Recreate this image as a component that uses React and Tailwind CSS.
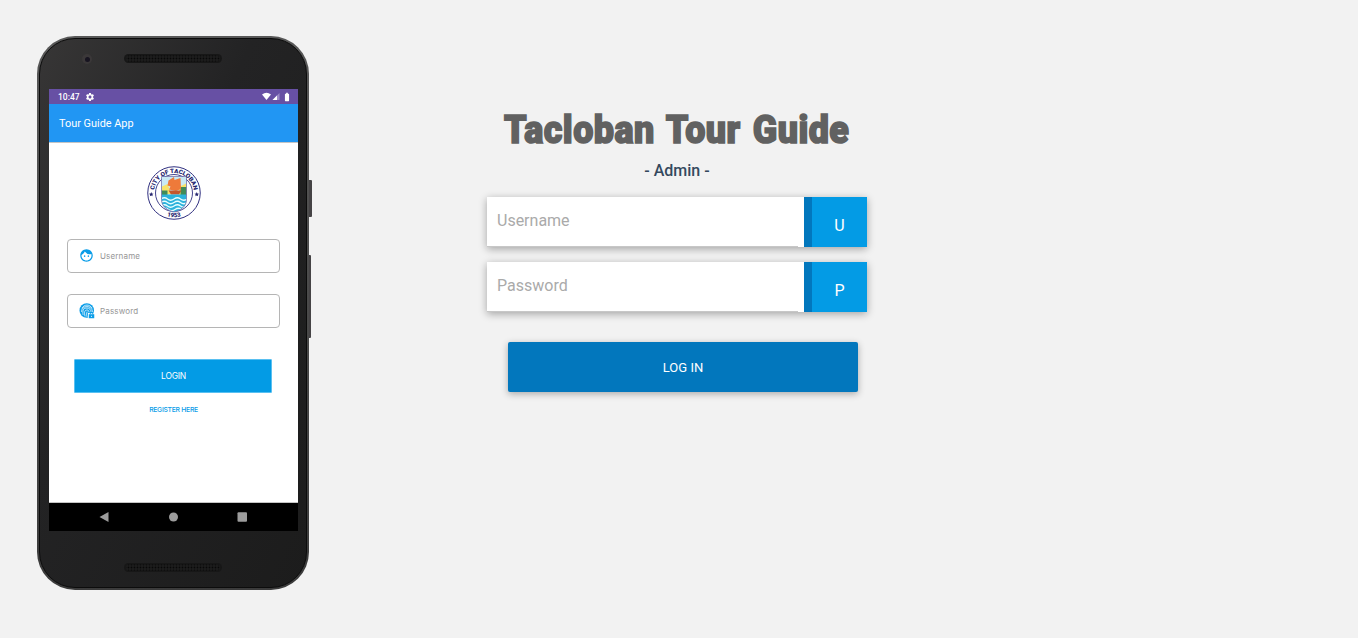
import React from "react";
import { MdFace, MdSettings, MdBatteryFull } from "react-icons/md";

function Grille() {
  return (
    <svg className="block" width="98" height="9" viewBox="0 0 98 9">
      <defs>
        <pattern id="mesh" width="3" height="3" patternUnits="userSpaceOnUse">
          <rect width="3" height="3" fill="#1d1d1d" />
          <circle cx="1.5" cy="1.5" r="0.9" fill="#080808" />
        </pattern>
      </defs>
      <rect width="98" height="9" rx="4.5" fill="#171717" />
      <rect x="2" y="1.5" width="94" height="6" rx="3" fill="url(#mesh)" />
    </svg>
  );
}

function CitySeal() {
  return (
    <svg className="block" width="54" height="54" viewBox="0 0 108 108">
      <defs>
        <path id="topArc" d="M14 54a40 40 0 0 1 80 0" />
        <path id="bottomArc" d="M5.500 54a48.500 48.500 0 0 0 97 0" />
        <clipPath id="shield">
          <path d="M29 21h50v46c0 14-12 22-25 25C41 89 29 81 29 67z" />
        </clipPath>
      </defs>
      <circle cx="54" cy="54" r="52.500" fill="#fff" stroke="#303080" strokeWidth="2" />
      <circle cx="54" cy="54" r="37" fill="#fff" stroke="#303080" strokeWidth="1.800" />
      <g clipPath="url(#shield)">
        <path fill="#c9e9f4" d="M28 20h54v74H28z" />
        <path fill="#f7e36a" d="M28 42l13-6 8 20H28zM64 42l18-9v25H64z" />
        <path fill="#418b58" d="M28 49h13v9H28zM67 42h13v17H67z" />
        <path fill="#ee7a3a" d="M43 29l11-7 1 6 12-4 1 22-10 4-14-3 3-6-6-2z" />
        <path fill="#c4562c" d="M43 49h26l-5 8H48z" />
        <path fill="#2cb2dc" d="M28 57h54v38H28z" />
        <path
          fill="none"
          stroke="#e8ffff"
          strokeWidth="2.500"
          d="M28 66q7-5 13 0t13 0 13 0 14 0M28 73q7-5 13 0t13 0 13 0 14 0M28 80q7-5 13 0t13 0 13 0 14 0M30 87q7-5 13 0t13 0 13 0"
        />
      </g>
      <path
        fill="none"
        stroke="#6a6aa8"
        strokeWidth="1.500"
        d="M29 21h50v46c0 14-12 22-25 25C41 89 29 81 29 67z"
      />
      <g fill="#24246e" fontFamily="Roboto, sans-serif" fontWeight="900" fontSize="12">
        <text>
          <textPath href="#topArc" startOffset="6" textLength="114" lengthAdjust="spacingAndGlyphs">
            CITY OF TACLOBAN
          </textPath>
        </text>
        <text fontSize="12" textAnchor="middle">
          <textPath href="#bottomArc" startOffset="50%">
            1953
          </textPath>
        </text>
      </g>
      <path
        fill="#24246e"
        d="M8.500 52l1.300 3 3.200.3-2.400 2.200.7 3.200-2.800-1.700-2.800 1.700.7-3.200L4 55.300l3.200-.3zM99.500 52l1.300 3 3.200.3-2.400 2.200.7 3.200-2.800-1.700-2.800 1.700.7-3.200-2.400-2.200 3.200-.3z"
      />
    </svg>
  );
}

function FingerprintLock() {
  return (
    <svg className="block" width="16" height="16" viewBox="0 0 32 32">
      <circle cx="15.500" cy="15" r="14.500" fill="#0a9de8" />
      <g fill="none" stroke="#fff" strokeWidth="1.500" strokeLinecap="round">
        <path d="M6 10c5-8 15-8 20 0" />
        <path d="M5 17c0-13 21-14 22 0" />
        <path d="M8 23c-1-8 0-13 8-13 5 0 8 4 8 7" />
        <path d="M12 26c-2-7-1-12 4-12 3 0 4 2 4 4" />
        <path d="M16 27c-1-4-1-6 0-9" />
      </g>
      <path fill="#fff" d="M18 20h14v12H18z" />
      <path fill="#0a9de8" d="M19.500 22.500h11v8h-11z" />
      <path fill="none" stroke="#0a9de8" strokeWidth="1.800" d="M22 23v-2q3-3 6 0v2" />
      <circle cx="25" cy="26.500" r="1.200" fill="#fff" />
    </svg>
  );
}

function PhoneField({ icon, label }) {
  return (
    <div className="flex h-[34px] items-center rounded-[4px] border border-[#b5b5b5] pb-[1px] pl-[11px]">
      <span className="flex w-4 justify-start">{icon}</span>
      <span className="ml-[5px] font-['Inter'] text-[8px] leading-[12px] tracking-[0.02em] text-[#969696]">{label}</span>
    </div>
  );
}

function Phone() {
  return (
    <div className="relative h-[554px] w-[272px]">
      <div className="absolute top-[144px] -right-[3px] h-[37px] w-[4px] rounded-r-[1px] bg-[#454345]" />
      <div className="absolute top-[219px] -right-[2px] h-[83px] w-[4px] rounded-r-[1px] bg-[#454345]" />
      <div className="relative h-full rounded-[38px] bg-linear-to-b from-[#585858] to-[#3b3b3b] p-[2px]">
        <div className="flex h-full flex-col rounded-[36px] border border-[#0c0c0c] bg-linear-to-br from-[#373636] via-[#232324] via-40% to-[#1c1c1c] pr-[8px] pl-[9px]">
          <div className="relative flex h-[50px] justify-center pt-[15px] pr-[2px]">
            <div className="absolute top-[15px] left-[33px] flex size-[10px] items-center justify-center rounded-full bg-[#3b3839]">
              <div className="size-[5px] rounded-full bg-[#171420]" />
            </div>
            <Grille />
          </div>
          <div className="flex h-[442px] w-[249px] flex-col bg-white font-['Roboto']">
            <div className="flex h-[15px] items-center bg-[#6750a4] pl-[9px] text-white">
              <span className="w-[21px] pt-[1px] text-[8.500px] leading-[14px] font-medium whitespace-nowrap">10:47</span>
              <MdSettings className="ml-[6px]" size={10} />
              <svg className="ml-auto" width="20" height="9" viewBox="0 0 20 9">
                <path fill="#fff" d="M0 2.500Q4.500-1 9 2.500L4.500 8z" />
                <path fill="#9d8bc7" d="M17.500 1v7h-7z" />
                <path fill="#fff" d="M15 3.500V8h-4.500z" />
              </svg>
              <MdBatteryFull className="mr-[6px]" size={10} />
            </div>
            <div className="flex h-[38px] items-center bg-[#2196f3] pt-[2px] pl-[10px] text-[10.900px] text-white">
              Tour Guide App
            </div>
            <div className="flex h-[361px] flex-col border-y border-[#c4c4c4] px-[18px] pt-[23px]">
              <div className="flex justify-center">
                <CitySeal />
              </div>
              <div className="mt-[19px] flex flex-col gap-[21px]">
                <PhoneField icon={<MdFace size={15} className="text-[#0a9de8]" />} label="Username" />
                <PhoneField icon={<FingerprintLock />} label="Password" />
              </div>
              <div className="mr-[8px] ml-[7px] mt-[31px] flex h-[34px] items-center justify-center rounded-[1px] border border-[#59c0f1] bg-[#039be5] pl-[1px] font-['Inter'] text-[8.500px] tracking-[-0.03em] text-white">
                LOGIN
              </div>
              <div className="mt-[12px] text-center font-['Inter'] text-[6.800px] leading-[10px] font-medium tracking-[-0.04em] text-[#0a9de8]">
                REGISTER HERE
              </div>
            </div>
            <div className="flex h-[28px] items-center justify-center bg-black">
              <svg width="150" height="12" viewBox="0 0 150 12" fill="#9c9c9c">
                <path d="M.5 6l9-5v10z" />
                <circle cx="74.500" cy="6" r="4.500" />
                <rect x="138.500" y="1.200" width="9.500" height="9.500" rx="1" />
              </svg>
            </div>
          </div>
          <div className="flex justify-center pt-[32px] pr-[2px]">
            <Grille />
          </div>
        </div>
      </div>
    </div>
  );
}

function LoginField({ type, label, letter }) {
  return (
    <div className="flex h-[50px] bg-white shadow-[0_2px_8px_rgba(0,0,0,0.33)]">
      <input
        type={type}
        placeholder={label}
        className="w-[311px] border-b-[1px] border-[#c7c7c7] px-[10px] pb-[2px] text-[16px] outline-none placeholder:text-[#aaaaaa]"
      />
      <div className="ml-auto flex w-[63px] items-center justify-center border-l-8 border-[#0277bd] bg-[#039be5] pt-[8px] text-[16px] text-white">
        {letter}
      </div>
    </div>
  );
}

export default function App() {
  return (
    <main className="flex h-[638px] w-full bg-[#f2f2f2] pt-[36px] pl-[37px] font-['Roboto']">
      <Phone />
      <section className="ml-[178px] w-[380px] pt-[69px]">
        <h1 className="flex h-[50px] items-center justify-center">
          <span className="inline-block origin-center scale-x-[0.92] text-[39px] leading-[50px] font-black tracking-[0.5px] [word-spacing:3px] whitespace-nowrap text-[#616161] [-webkit-text-stroke:1.600px_#616161]">
            Tacloban Tour Guide
          </span>
        </h1>
        <p className="mt-[4px] text-center text-[16px] leading-[24px] font-medium text-[#34495e]">- Admin -</p>
        <form className="mt-[14px]" onSubmit={(e) => e.preventDefault()}>
          <div className="flex flex-col gap-[15px]">
            <LoginField type="text" label="Username" letter="U" />
            <LoginField type="password" label="Password" letter="P" />
          </div>
          <button className="mt-[30px] ml-[21px] block h-[50px] w-[350px] rounded-[2px] bg-[#0277bd] pt-[2px] text-[13px] text-white shadow-[0_2px_7px_rgba(0,0,0,0.3)]">
            LOG IN
          </button>
        </form>
      </section>
    </main>
  );
}
